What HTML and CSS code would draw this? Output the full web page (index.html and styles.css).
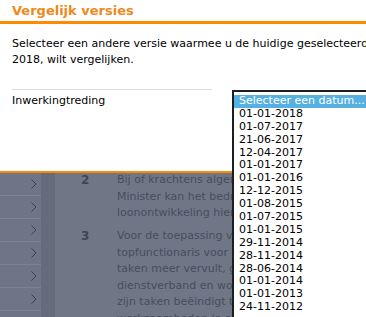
FILE: index.html
```html
<!DOCTYPE html>
<html>
<head>
    <title>Vergelijk versies</title>
    <link rel="stylesheet" href="styles.css">
</head>
<body>
    <div class="page dimmed">
        <ul class="nav">
            <li><svg width="6" height="10" viewBox="0 0 6 10"><polyline points="0.5,0.5 5,5 0.5,9.5"/></svg></li>
            <li><svg width="6" height="10" viewBox="0 0 6 10"><polyline points="0.5,0.5 5,5 0.5,9.5"/></svg></li>
            <li><svg width="6" height="10" viewBox="0 0 6 10"><polyline points="0.5,0.5 5,5 0.5,9.5"/></svg></li>
            <li><svg width="6" height="10" viewBox="0 0 6 10"><polyline points="0.5,0.5 5,5 0.5,9.5"/></svg></li>
            <li><svg width="6" height="10" viewBox="0 0 6 10"><polyline points="0.5,0.5 5,5 0.5,9.5"/></svg></li>
            <li><svg width="6" height="10" viewBox="0 0 6 10"><polyline points="0.5,0.5 5,5 0.5,9.5"/></svg></li>
            <li><svg width="6" height="10" viewBox="0 0 6 10"><polyline points="0.5,0.5 5,5 0.5,9.5"/></svg></li>
        </ul>
        <div class="strip"></div>
        <div class="content">
            <div class="lid">
                <span class="nr">2</span>
                <p>Bij of krachtens algemene maatregel van bestuur<br>Minister kan het bedrag, bedoeld in het eerste lid,<br>loonontwikkeling hiervan wordt mededeling gedaan.</p>
            </div>
            <div class="lid">
                <span class="nr">3</span>
                <p>Voor de toepassing van het eerste lid wordt de<br>topfunctionaris voor de periode waarin hij zijn<br>taken meer vervult, geacht een functie te hebben<br>dienstverband en wordt de bezoldiging over die<br>zijn taken beëindigt tot het einde van het<br>werkzaamheden in aanmerking genomen.</p>
            </div>
        </div>
    </div>

    <div class="modal">
        <h2 class="modal-title">Vergelijk versies</h2>
        <p class="intro">Selecteer een andere versie waarmee u de huidige geselecteerde versie, geldend vanaf 01-01-<br>2018, wilt vergelijken.</p>
        <div class="field">
            <label>Inwerkingtreding</label>
        </div>
    </div>

    <ul class="datelist">
        <li class="selected">Selecteer een datum...</li>
        <li>01-01-2018</li>
        <li>01-07-2017</li>
        <li>21-06-2017</li>
        <li>12-04-2017</li>
        <li>01-01-2017</li>
        <li>01-01-2016</li>
        <li>12-12-2015</li>
        <li>01-08-2015</li>
        <li>01-07-2015</li>
        <li>01-01-2015</li>
        <li>29-11-2014</li>
        <li>28-11-2014</li>
        <li>28-06-2014</li>
        <li>01-01-2014</li>
        <li>01-01-2013</li>
        <li>24-11-2012</li>
    </ul>
</body>
</html>
```

FILE: styles.css
```css
html, body {
    margin: 0;
    height: 100%;
    overflow: hidden;
}

body {
    font-family: "DejaVu Sans", Verdana, sans-serif;
    font-size: 11px;
    background: #6f7787;
    position: relative;
}

/* page behind the dialog, dimmed */
.page {
    display: flex;
    height: 100%;
}

.dimmed {
    background: #6f7787;
    color: #474d5d;
}

.nav {
    list-style: none;
    margin: 0;
    padding: 173px 0 0 0;
    width: 41px;
    flex-shrink: 0;
    background: #6d7586;
}

.nav li {
    height: 22px;
    border-bottom: 1px solid #7b8393;
    display: flex;
    align-items: center;
    justify-content: flex-end;
    padding-right: 4px;
}

.nav svg polyline {
    fill: none;
    stroke: #3a4050;
    stroke-width: 1;
}

.strip {
    width: 14px;
    flex-shrink: 0;
    background: #646b7b;
}

.content {
    padding: 172px 0 0 26px;
    white-space: nowrap;
    line-height: 16.5px;
}

.lid {
    display: flex;
    margin-bottom: 6.5px;
}

.nr {
    width: 36px;
    flex-shrink: 0;
    font-weight: bold;
    font-size: 12px;
    color: #3f4555;
}

.lid p {
    margin: 0;
}

/* dialog */
.modal {
    position: absolute;
    top: 0;
    left: 0;
    width: 620px;
    height: 171px;
    background: #fff;
    border-bottom: 2px solid #ff8a00;
    color: #000;
}

.modal-title {
    margin: 0;
    height: 24px;
    box-sizing: border-box;
    padding: 3px 12px 0 12px;
    font-size: 13px;
    line-height: 16px;
    color: #f0891a;
    border-bottom: 3px solid #ff8a00;
}

.intro {
    margin: 12px 0 0 12px;
    line-height: 16px;
    white-space: nowrap;
}

.field {
    margin: 21px 0 0 12px;
    width: 200px;
    border-top: 1px solid #dcdcdc;
    padding-top: 3px;
    line-height: 15px;
}

.datelist {
    position: absolute;
    top: 90px;
    left: 232px;
    width: 160px;
    margin: 0;
    padding: 3px 0 0 0;
    list-style: none;
    background: #fff;
    border: 2px solid #1e1e1e;
    border-right: none;
    border-bottom: none;
    height: 300px;
    color: #000;
}

.datelist li {
    height: 12.9px;
    line-height: 12.9px;
    padding-left: 5px;
}

.datelist .selected {
    background: #56b1e2;
    color: #fff;
}
```
